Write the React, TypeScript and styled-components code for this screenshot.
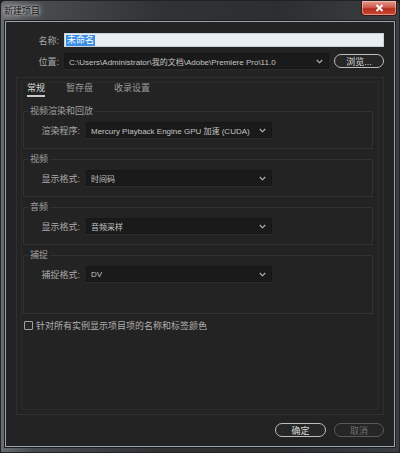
import { FC, ReactNode } from "react";
import styled, { createGlobalStyle } from "styled-components";

const GlobalStyle = createGlobalStyle`
  html, body {
    margin: 0;
    padding: 0;
    background: #1e1e1e;
  }
  body {
    font-family: "Liberation Sans", "Noto Sans CJK SC", sans-serif;
  }
`;

const font = `"Liberation Sans", "Noto Sans CJK SC", sans-serif`;

const Window = styled.div`
  width: 400px;
  height: 453px;
  box-sizing: border-box;
  display: flex;
  flex-direction: column;
  border: 1px solid #202224;
  border-radius: 5px 5px 2px 2px;
  background: linear-gradient(
    to right,
    #6a6d70 0%,
    #4a4d50 8%,
    #303234 40%,
    #2c2e30 70%,
    #3c3f42 100%
  );
  overflow: hidden;
`;

const TitleBar = styled.div`
  height: 20px;
  flex-shrink: 0;
  display: flex;
  align-items: flex-start;
  padding-left: 3px;
`;

const Title = styled.div`
  font-family: ${font};
  font-size: 9px;
  color: #101010;
  line-height: 20px;
  text-shadow: 0 0 6px #d8d8d8, 0 0 3px #e8e8e8;
`;

const CloseButton = styled.div`
  margin-left: auto;
  margin-right: 2px;
  width: 36px;
  height: 15px;
  box-sizing: border-box;
  border: 1px solid #3a1a18;
  border-top: none;
  border-radius: 0 0 4px 4px;
  background: linear-gradient(to bottom, #e59a8f 0%, #cf5b4c 45%, #b5301f 55%, #c94a36 100%);
  box-shadow: inset 0 0 0 1px rgba(255, 220, 210, 0.5);
  display: flex;
  align-items: center;
  justify-content: center;
`;

const Client = styled.div`
  flex: 1;
  margin: 0 4px 5px;
  border: 1px solid #9aa2aa;
  box-shadow: 0 0 0 1px #1c1d1f;
  background: #232323;
  display: flex;
  flex-direction: column;
  padding: 11px 10px 9px;
  min-height: 0;
`;

const FormRow = styled.div<{ $top?: number }>`
  display: grid;
  grid-template-columns: 43px 1fr auto;
  column-gap: 5px;
  align-items: center;
  margin-top: ${({ $top }) => $top ?? 0}px;
`;

const Label = styled.div`
  font-family: ${font};
  font-size: 9px;
  color: #a8a8a8;
  text-align: right;
  white-space: nowrap;
`;

const TextInput = styled.div`
  grid-column: 2 / 4;
  height: 14px;
  box-sizing: border-box;
  background: #e6edf3;
  border: 1px solid #c8d0d8;
  display: flex;
  align-items: center;
  padding-left: 1px;
`;

const Selected = styled.span`
  font-family: ${font};
  font-size: 9px;
  line-height: 11px;
  background: #3a8ee6;
  color: #ffffff;
  padding: 0 1px;
`;

const Select = styled.div<{ $width?: number }>`
  height: 16px;
  box-sizing: border-box;
  width: ${({ $width }) => ($width ? `${$width}px` : "auto")};
  background: #1a1a1a;
  border: 1px solid #161616;
  box-shadow: 0 1px 0 #2c2c2c;
  display: flex;
  align-items: center;
  padding: 0 5px 0 4px;
  font-family: ${font};
  font-size: 8px;
  color: #c4c4c4;
  white-space: nowrap;
  overflow: hidden;
`;

const SelectText = styled.span`
  flex: 1;
  overflow: hidden;
`;

const PillButton = styled.div<{ $disabled?: boolean; $width: number }>`
  width: ${({ $width }) => $width}px;
  height: 14px;
  box-sizing: border-box;
  border: 1px solid ${({ $disabled }) => ($disabled ? "#5a5a5a" : "#bdbdbd")};
  border-radius: 8px;
  display: flex;
  align-items: center;
  justify-content: center;
  font-family: ${font};
  font-size: 9px;
  color: ${({ $disabled }) => ($disabled ? "#6e6e6e" : "#dcdcdc")};
  background: #262626;
`;

const Panel = styled.div`
  flex: 1;
  margin-top: 8px;
  border: 1px solid #2f2f2f;
  box-shadow: inset 0 0 0 4px #232323, inset 0 0 0 5px #2a2a2a;
  padding: 0 10px 0 6px;
  display: flex;
  flex-direction: column;
`;

const Tabs = styled.div`
  display: flex;
  gap: 21px;
  padding: 3px 0 0 4px;
`;

const Tab = styled.div<{ $active?: boolean }>`
  font-family: ${font};
  font-size: 9px;
  line-height: 12px;
  color: ${({ $active }) => ($active ? "#d8d8d8" : "#9c9c9c")};
  padding: 1px 0 1px;
  border-bottom: 2px solid ${({ $active }) => ($active ? "#c8c8c8" : "transparent")};
`;

const Group = styled.fieldset<{ $tall?: boolean }>`
  margin: 9px 0 0;
  padding: 5px 0 ${({ $tall }) => ($tall ? 31 : 10)}px;
  border: 1px solid #323232;
  min-width: 0;
  & + & {
    margin-top: 5px;
  }
`;

const Legend = styled.legend`
  font-family: ${font};
  font-size: 9px;
  color: #a0a0a0;
  padding: 0 2px;
  margin-left: 4px;
  line-height: 11px;
`;

const GroupRow = styled.div`
  display: grid;
  grid-template-columns: 56px 186px;
  column-gap: 6px;
  align-items: center;
`;

const CheckRow = styled.div`
  display: flex;
  align-items: center;
  gap: 3px;
  margin: 5px 0 0 1px;
`;

const CheckBox = styled.div`
  width: 9px;
  height: 9px;
  box-sizing: border-box;
  border: 1px solid #a0a0a0;
  border-radius: 1px;
  background: #262626;
`;

const CheckLabel = styled.span`
  font-family: ${font};
  font-size: 9px;
  color: #b0b0b0;
`;

const Footer = styled.div`
  display: flex;
  justify-content: flex-end;
  gap: 8px;
  margin-top: 8px;
`;

const Chevron: FC = () => (
  <svg width="7" height="5" viewBox="0 0 7 5">
    <path d="M0.8 1 L3.5 3.8 L6.2 1" fill="none" stroke="#bcbcbc" strokeWidth="1.1" />
  </svg>
);

const Dropdown: FC<{ value: ReactNode; width?: number }> = ({ value, width }) => (
  <Select $width={width}>
    <SelectText>{value}</SelectText>
    <Chevron />
  </Select>
);

const SettingGroup: FC<{ title: string; label: string; value: string; tall?: boolean }> = ({
  title,
  label,
  value,
  tall,
}) => (
  <Group $tall={tall}>
    <Legend>{title}</Legend>
    <GroupRow>
      <Label>{label}</Label>
      <Dropdown value={value} width={186} />
    </GroupRow>
  </Group>
);

export default function App() {
  return (
    <>
      <GlobalStyle />
      <Window>
        <TitleBar>
          <Title>新建项目</Title>
          <CloseButton>
            <svg width="9" height="8" viewBox="0 0 9 8">
              <path d="M1.5 1 L7.5 7 M7.5 1 L1.5 7" stroke="#ffffff" strokeWidth="1.8" />
            </svg>
          </CloseButton>
        </TitleBar>
        <Client>
          <FormRow>
            <Label>名称:</Label>
            <TextInput>
              <Selected>未命名</Selected>
            </TextInput>
          </FormRow>
          <FormRow $top={6}>
            <Label>位置:</Label>
            <Dropdown value={"C:\\Users\\Administrator\\我的文档\\Adobe\\Premiere Pro\\11.0"} />
            <PillButton $width={50}>浏览...</PillButton>
          </FormRow>
          <Panel>
            <Tabs>
              <Tab $active>常规</Tab>
              <Tab>暂存盘</Tab>
              <Tab>收录设置</Tab>
            </Tabs>
            <SettingGroup
              title="视频渲染和回放"
              label="渲染程序:"
              value="Mercury Playback Engine GPU 加速 (CUDA)"
            />
            <SettingGroup title="视频" label="显示格式:" value="时间码" />
            <SettingGroup title="音频" label="显示格式:" value="音频采样" />
            <SettingGroup title="捕捉" label="捕捉格式:" value="DV" tall />
            <CheckRow>
              <CheckBox />
              <CheckLabel>针对所有实例显示项目项的名称和标签颜色</CheckLabel>
            </CheckRow>
          </Panel>
          <Footer>
            <PillButton $width={51}>确定</PillButton>
            <PillButton $width={50} $disabled>
              取消
            </PillButton>
          </Footer>
        </Client>
      </Window>
    </>
  );
}
